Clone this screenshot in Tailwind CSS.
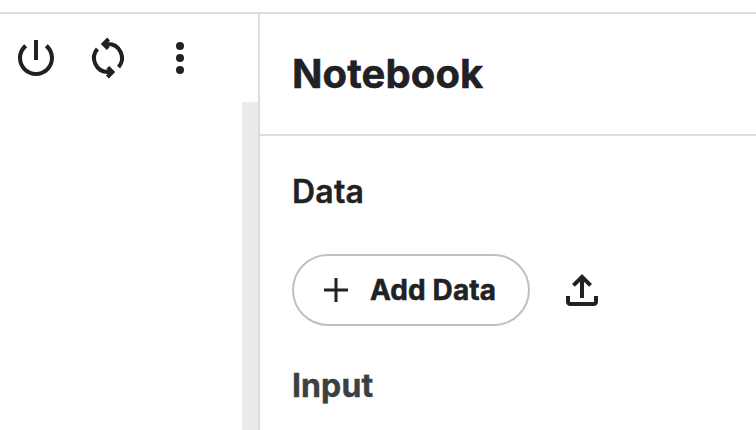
<!DOCTYPE html>
<html lang="en">
<head>
<meta charset="utf-8">
<title>Notebook</title>
<script src="https://cdn.jsdelivr.net/npm/@tailwindcss/browser@4"></script>
</head>
<body class="h-[430px] w-[756px] overflow-hidden bg-white font-['Inter',sans-serif] text-[#202124]">
<div class="mt-3 flex h-[418px] border-t-2 border-[#dadce0]">
  <div class="flex w-[258px] shrink-0 flex-col">
    <div class="flex h-[88px] shrink-0 gap-6 pt-5 pl-3">
      <svg class="size-12" viewBox="0 0 24 24" fill="currentColor"><path d="M13 3h-2v10h2V3zm4.83 2.17-1.42 1.42C17.99 7.86 19 9.81 19 12c0 3.87-3.13 7-7 7s-7-3.13-7-7c0-2.19 1.01-4.14 2.58-5.42L6.17 5.17C4.23 6.82 3 9.26 3 12c0 4.97 4.03 9 9 9s9-4.03 9-9c0-2.74-1.23-5.18-3.17-6.83z"/></svg>
      <svg class="size-12" viewBox="0 0 24 24" fill="none" stroke="currentColor" stroke-width="2"><path d="M10 5h2A7 7 0 0 1 17.300 16.550M14 19h-2A7 7 0 0 1 6.700 7.450M12.300 2.500 9.800 5l2.300 2.300M11.700 21.500 14.200 19l-2.300-2.300"/></svg>
      <svg class="size-12" viewBox="0 0 24 24" fill="currentColor"><circle cx="12" cy="6" r="2"/><circle cx="12" cy="12" r="2"/><circle cx="12" cy="18" r="2"/></svg>
    </div>
    <div class="ml-auto w-4 grow bg-[#ebebeb]"></div>
  </div>
  <div class="grow border-l-2 border-[#dadce0]">
    <div class="flex h-[122px] items-center border-b-2 border-[#dadce0] pl-8"><h1 class="text-[40px] leading-[48px] font-bold tracking-[0.1px] [-webkit-text-stroke:0.5px]">Notebook</h1></div>
    <div class="flex flex-col pl-8">
      <h2 class="mt-9 text-[32px] leading-10 font-semibold tracking-[0.2px] [-webkit-text-stroke:0.4px]">Data</h2>
      <div class="mt-[42px] flex items-center gap-7">
        <button class="flex h-[72px] w-[238px] items-center rounded-full border-2 border-[#bdc1c6] pl-[18px]">
          <svg class="size-12" viewBox="0 0 24 24" fill="none" stroke="currentColor" stroke-width="1.5"><path d="M12 6v12M6 12h12"/></svg>
          <span class="ml-[10px] text-[28px] leading-9 font-bold tracking-[0.1px] whitespace-nowrap [-webkit-text-stroke:0.5px]">Add Data</span>
        </button>
        <svg class="size-12" viewBox="0 0 24 24" fill="currentColor"><path d="M18 15v3H6v-3H4v3c0 1.100.9 2 2 2h12c1.100 0 2-.9 2-2v-3h-2zM7 9l1.410 1.410L11 7.830V16h2V7.830l2.590 2.580L17 9l-5-5-5 5z"/></svg>
      </div>
      <h2 class="mt-10 text-[32px] leading-10 font-bold tracking-[0.1px] text-[#3c4043] [-webkit-text-stroke:0.4px]">Input</h2>
    </div>
  </div>
</div>
</body>
</html>
